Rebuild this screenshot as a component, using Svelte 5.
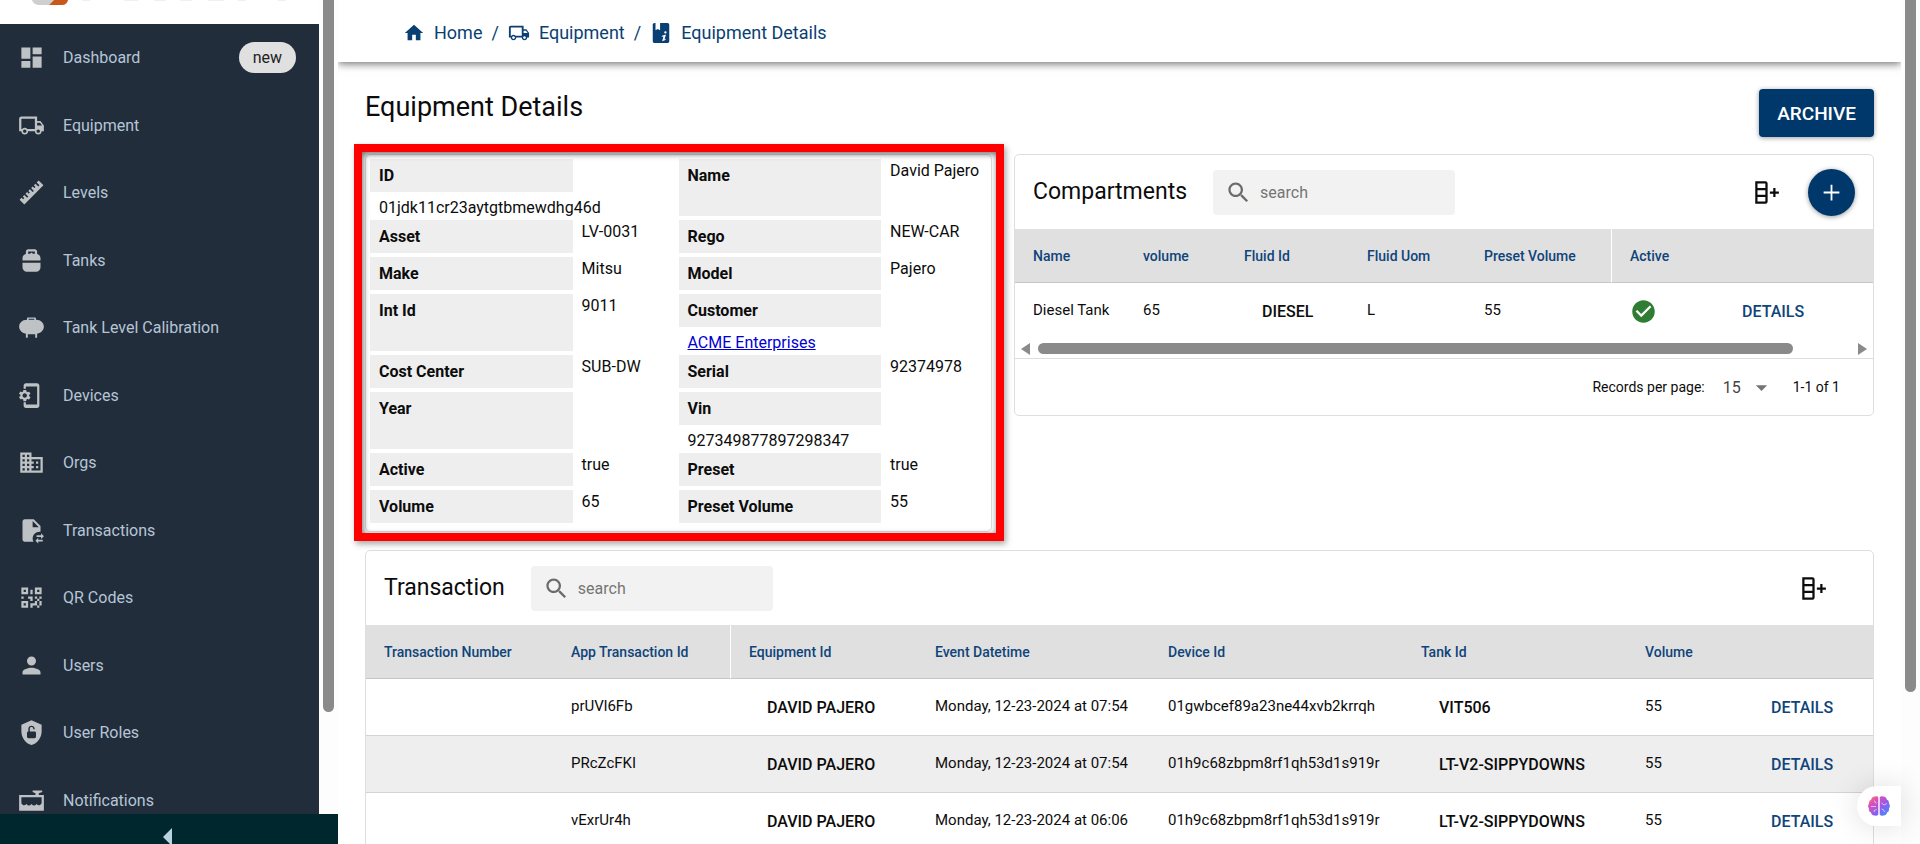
<script>
  // Sidebar entries, each with the name of its icon
  const menu = [
    { label: 'Dashboard', icon: 'dashboard', badge: 'new' },
    { label: 'Equipment', icon: 'truck' },
    { label: 'Levels', icon: 'ruler' },
    { label: 'Tanks', icon: 'tank' },
    { label: 'Tank Level Calibration', icon: 'storage' },
    { label: 'Devices', icon: 'device' },
    { label: 'Orgs', icon: 'domain' },
    { label: 'Transactions', icon: 'fileSwap' },
    { label: 'QR Codes', icon: 'qrcode' },
    { label: 'Users', icon: 'person' },
    { label: 'User Roles', icon: 'shield' },
    { label: 'Notifications', icon: 'level' }
  ];

  const crumbs = [
    { label: 'Home', icon: 'home' },
    { label: 'Equipment', icon: 'truck' },
    { label: 'Equipment Details', icon: 'bookInfo' }
  ];

  // All paths are on a 24x24 grid
  const icons = {
    dashboard: 'M13,3V9H21V3M13,21H21V11H13M3,21H11V15H3M3,13H11V3H3V13Z',
    truck: 'M18 18.5C18.83 18.5 19.5 17.83 19.5 17C19.5 16.17 18.83 15.5 18 15.5C17.17 15.5 16.5 16.17 16.5 17C16.5 17.83 17.17 18.5 18 18.5M19.5 9.5H17V12H21.46L19.5 9.5M6 18.5C6.83 18.5 7.5 17.83 7.5 17C7.5 16.17 6.83 15.5 6 15.5C5.17 15.5 4.5 16.17 4.5 17C4.5 17.83 5.17 18.5 6 18.5M20 8L23 12V17H21C21 18.66 19.66 20 18 20C16.34 20 15 18.66 15 17H9C9 18.66 7.66 20 6 20C4.34 20 3 18.66 3 17H1V6C1 4.89 1.89 4 3 4H17V8H20M3 6V15H3.76C4.31 14.39 5.11 14 6 14C6.89 14 7.69 14.39 8.24 15H15V6H3Z',
    ruler: 'M1.39,18.36L3.16,16.6L4.58,18L5.64,16.95L4.22,15.54L5.64,14.12L8.11,16.6L9.17,15.54L6.7,13.06L8.11,11.65L9.53,13.06L10.59,12L9.17,10.59L10.59,9.17L13.06,11.65L14.12,10.59L11.65,8.11L13.06,6.7L14.47,8.11L15.54,7.05L14.12,5.64L15.54,4.22L18,6.7L19.07,5.64L16.6,3.16L18.36,1.39L22.61,5.64L5.64,22.61L1.39,18.36Z',
    tank: 'M17 6.14V4c0-1.1-.9-2-2-2H9c-1.1 0-2 .9-2 2v2.14c-1.72.45-3 2-3 3.86v2h16v-2c0-1.86-1.28-3.41-3-3.86zM9 4h6v2h-2c0-.55-.45-1-1-1s-1 .45-1 1H9V4zM4 18c0 2.21 1.79 4 4 4h8c2.21 0 4-1.79 4-4v-4H4v4z',
    storage: 'M8 5V4C8 3.4 8.4 3 9 3H15C15.6 3 16 3.4 16 4V5C20.5 5 23 8 23 11.2C23 14.2 20.8 17 17 17.6V21H15.3V18H8.7V21H7V17.6C3.2 17 1 14.2 1 11.2C1 8 3.5 5 8 5M9.5 4.3V5H14.5V4.3Z',
    device: 'M9.8 12.5v-1l1.1-.8c.1-.1.1-.2.1-.3l-1-1.7c-.1-.1-.2-.2-.3-.1l-1.3.4c-.3-.2-.6-.4-.9-.5l-.2-1.3c0-.1-.1-.2-.3-.2H5c-.1 0-.2.1-.3.2l-.2 1.3c-.3.1-.6.3-.9.5l-1.3-.5c-.1 0-.2 0-.3.1l-1 1.7c-.1.1 0 .2.1.3l1.1.8v1l-1.1.8c-.1.2-.1.3-.1.4l1 1.7c.1.1.2.2.3.1l1.4-.4c.3.2.6.4.9.5l.2 1.3c-.1.1.1.2.2.2h2c.1 0 .2-.1.3-.2l.2-1.3c.3-.1.6-.3.9-.5l1.3.5c.1 0 .2 0 .3-.1l1-1.7c.1-.1 0-.2-.1-.3zM6 14c-1.1 0-2-.9-2-2s.9-2 2-2 2 .9 2 2-.9 2-2 2zM17 1H7c-1.1 0-2 .9-2 2v3h2V4h10v16H7v-2H5v3c0 1.1.9 2 2 2h10c1.1 0 2-.9 2-2V3c0-1.1-.9-2-2-2z',
    domain: 'M12 7V3H2v18h20V7H12zM6 19H4v-2h2v2zm0-4H4v-2h2v2zm0-4H4V9h2v2zm0-4H4V5h2v2zm4 12H8v-2h2v2zm0-4H8v-2h2v2zm0-4H8V9h2v2zm0-4H8V5h2v2zm10 12h-8v-2h2v-2h-2v-2h2v-2h-2V9h8v10zm-2-8h-2v2h2v-2zm0 4h-2v2h2v-2z',
    fileSwap: 'M6 2C4.9 2 4 2.9 4 4V20C4 21.1 4.9 22 6 22H13.8C13.3 21.1 13 20.1 13 19C13 15.7 15.7 13 19 13C19.3 13 19.7 13 20 13.1V8L14 2H6M13 9V3.5L18.5 9H13M23 17L20.5 14.5V16.2H16.5V17.8H20.5V19.5L23 17M15.5 21L18 23.5V21.8H22V20.2H18V18.5L15.5 21Z',
    qrcode: 'M3,11H5V13H3V11M11,5H13V9H11V5M9,11H13V15H11V13H9V11M15,11H17V13H19V11H21V13H19V15H21V19H19V21H17V19H13V21H11V17H15V15H17V13H15V11M19,19V15H17V19H19M15,3H21V9H15V3M17,5V7H19V5H17M3,3H9V9H3V3M5,5V7H7V5H5M3,15H9V21H3V15M5,17V19H7V17H5Z',
    person: 'M12 12c2.21 0 4-1.79 4-4s-1.79-4-4-4-4 1.79-4 4 1.79 4 4 4zm0 2c-2.67 0-8 1.34-8 4v2h16v-2c0-2.66-5.33-4-8-4z',
    shield: 'M12 1L3 5V11C3 16.5 6.8 21.7 12 23C17.2 21.7 21 16.5 21 11V5L12 1M16 15.8C16 16.4 15.4 17 14.7 17H9.2C8.6 17 8 16.4 8 15.7V12.2C8 11.6 8.6 11 9.2 11V8.5C9.2 7.1 10.6 6 12 6S14.8 7.1 14.8 8.5V9H13.5V8.5C13.5 7.7 12.8 7.2 12 7.2S10.5 7.7 10.5 8.5V11H14.8C15.4 11 16 11.6 16 12.2V15.8Z',
    level: 'M1 7H15.5V5.5L13 4.5V3H21.5V4.5L18.5 5.5V7H23V21H1V7M3 9V14.5C4.5 16.8 6 16.8 7.5 15C9 16.8 10.5 16.8 12 15C13.5 16.8 15 16.8 16.5 15C18 16.8 19.5 16.8 21 14.5V9H3Z',
    home: 'M10 20v-6h4v6h5v-8h3L12 3 2 12h3v8z',
    bookInfo: 'M5 1H6V9L8.5 7.5L11 9V1H19C20.1 1 21 1.9 21 3V21C21 22.1 20.1 23 19 23H5C3.9 23 3 22.1 3 21V3C3 1.9 3.9 1 5 1M16.8 10A1.3 1.3 0 1 0 16.8 12.6A1.3 1.3 0 1 0 16.8 10M13 14.9L17.4 13.6L15.8 19L17.2 18.4L16.9 19.6L13.3 20.9L14.6 15.7L12.8 16Z',
    search: 'M15.5 14h-.79l-.28-.27C15.41 12.59 16 11.11 16 9.5 16 5.91 13.09 3 9.5 3S3 5.91 3 9.5 5.91 16 9.5 16c1.61 0 3.09-.59 4.23-1.57l.27.28v.79l5 4.99L20.49 19l-4.99-5zm-6 0C7.01 14 5 11.99 5 9.5S7.01 5 9.5 5 14 7.01 14 9.5 11.99 14 9.5 14z',
    columns: 'M11,2A2,2 0 0,1 13,4V20A2,2 0 0,1 11,22H2V2H11M4,10V14H11V10H4M4,16V20H11V16H4M4,4V8H11V4H4M15,11H18V8H20V11H23V13H20V16H18V13H15V11Z',
    check: 'M12 2C6.48 2 2 6.48 2 12s4.48 10 10 10 10-4.48 10-10S17.52 2 12 2zm-2 15l-5-5 1.41-1.41L10 14.17l7.59-7.59L19 8l-9 9z',
    plus: 'M19 12.8h-6.2v6.2h-1.6v-6.2H5v-1.6h6.2V5h1.6v6.2H19z',
    caret: 'M7 10l5 5 5-5z'
  };

  const details = [
    ['ID', '01jdk11cr23aytgtbmewdhg46d'],
    ['Name', 'David Pajero'],
    ['Asset', 'LV-0031'],
    ['Rego', 'NEW-CAR'],
    ['Make', 'Mitsu'],
    ['Model', 'Pajero'],
    ['Int Id', '9011'],
    ['Customer', 'ACME Enterprises', true],
    ['Cost Center', 'SUB-DW'],
    ['Serial', '92374978'],
    ['Year', ''],
    ['Vin', '927349877897298347'],
    ['Active', 'true'],
    ['Preset', 'true'],
    ['Volume', '65'],
    ['Preset Volume', '55']
  ];

  const compartmentCols = [
    { label: 'Name', width: 110 },
    { label: 'volume', width: 101 },
    { label: 'Fluid Id', width: 123 },
    { label: 'Fluid Uom', width: 117 },
    { label: 'Preset Volume', width: 146, divider: true },
    { label: 'Active', width: 94 },
    { label: '', width: 167 }
  ];

  const transactionCols = [
    { label: 'Transaction Number', width: 187 },
    { label: 'App Transaction Id', width: 178, divider: true },
    { label: 'Equipment Id', width: 186 },
    { label: 'Event Datetime', width: 233 },
    { label: 'Device Id', width: 253 },
    { label: 'Tank Id', width: 224 },
    { label: 'Volume', width: 108 },
    { label: '', width: 138 }
  ];

  const transactions = [
    { app: 'prUVl6Fb', equipment: 'David Pajero', date: 'Monday, 12-23-2024 at 07:54', device: '01gwbcef89a23ne44xvb2krrqh', tank: 'VIT506', volume: 55 },
    { app: 'PRcZcFKI', equipment: 'David Pajero', date: 'Monday, 12-23-2024 at 07:54', device: '01h9c68zbpm8rf1qh53d1s919r', tank: 'LT-V2-Sippydowns', volume: 55 },
    { app: 'vExrUr4h', equipment: 'David Pajero', date: 'Monday, 12-23-2024 at 06:06', device: '01h9c68zbpm8rf1qh53d1s919r', tank: 'LT-V2-Sippydowns', volume: 55 }
  ];

  let perPage = $state('15');
</script>

{#snippet icon(name)}
  <svg class="icon" viewBox="0 0 24 24" aria-hidden="true">
    <path d={icons[name]} fill="currentColor" fill-rule="evenodd" />
  </svg>
{/snippet}

{#snippet searchBox(label)}
  <label class="search">
    {@render icon('search')}
    <input type="text" placeholder="search" aria-label={label} />
  </label>
{/snippet}

{#snippet tableHead(cols)}
  <colgroup>
    {#each cols as col}
      <col style="width: {col.width}px" />
    {/each}
  </colgroup>
  <thead>
    <tr>
      {#each cols as col}
        <th class:divider={col.divider}>{col.label}</th>
      {/each}
    </tr>
  </thead>
{/snippet}

<div class="layout">
  <aside>
    <div class="menu-area">
      <div class="menu">
        <div class="logo">
          <svg width="260" height="6" viewBox="0 0 260 6" aria-hidden="true">
            <path d="M0 0H22L17 5H6Q1 4 0 0Z" fill="#cfcfcf" />
            <path d="M22 0H36Q35 5 30 5H17Z" fill="#c9571b" />
            <path d="M50 0h8M92 0h14M122 0h12M148 0h12M176 0h16M206 0h8M246 0h8" stroke="#f0f0f0" stroke-width="2" />
          </svg>
        </div>
        <nav>
          <ul>
            {#each menu as item}
              <li>
                <a href="#{item.icon}">
                  {@render icon(item.icon)}
                  <span class="menu-label">{item.label}</span>
                  {#if item.badge}<span class="badge">{item.badge}</span>{/if}
                </a>
              </li>
            {/each}
          </ul>
        </nav>
      </div>
      <div class="scroll"><div class="thumb menu-thumb"></div></div>
    </div>
    <button class="collapse" aria-label="Collapse menu">
      <svg width="9" height="18" viewBox="0 0 9 18"><path d="M9 0V18L0 9Z" fill="#b9d3e0" /></svg>
    </button>
  </aside>

  <div class="page">
    <header>
      <nav class="crumbs" aria-label="Breadcrumb">
        {#each crumbs as crumb, i}
          {#if i > 0}<span class="slash">/</span>{/if}
          <a href="#{crumb.icon}">{@render icon(crumb.icon)}{crumb.label}</a>
        {/each}
      </nav>
    </header>

    <main>
      <div class="title-row">
        <h1>Equipment Details</h1>
        <button class="archive">Archive</button>
      </div>

      <div class="top">
        <section class="card details">
          <dl>
            {#each details as [label, value, link]}
              <div class="pair">
                <dt>{label}</dt>
                <dd>{#if link}<a href="#customer">{value}</a>{:else}{value}{/if}</dd>
              </div>
            {/each}
          </dl>
          <div class="highlight"></div>
        </section>

        <section class="card">
          <div class="toolbar">
            <h2>Compartments</h2>
            {@render searchBox('Search compartments')}
            <div class="actions">
              <button class="plain" aria-label="Choose columns">{@render icon('columns')}</button>
              <button class="round" aria-label="Add compartment">{@render icon('plus')}</button>
            </div>
          </div>
          <table>
            {@render tableHead(compartmentCols)}
            <tbody>
              <tr>
                <td>Diesel Tank</td>
                <td>65</td>
                <td><button class="flat">Diesel</button></td>
                <td>L</td>
                <td>55</td>
                <td class="status">{@render icon('check')}</td>
                <td><button class="flat primary">Details</button></td>
              </tr>
            </tbody>
          </table>
          <div class="hscroll">
            <svg width="9" height="12" viewBox="0 0 9 12"><path d="M9 0V12L0 6Z" fill="#8a8a8a" /></svg>
            <div class="track"><div class="hthumb"></div></div>
            <svg width="9" height="12" viewBox="0 0 9 12"><path d="M0 0V12L9 6Z" fill="#8a8a8a" /></svg>
          </div>
          <div class="pager">
            <label for="per-page">Records per page:</label>
            <span class="select">
              <select id="per-page" bind:value={perPage}>
                <option>15</option>
                <option>25</option>
                <option>50</option>
              </select>
              {@render icon('caret')}
            </span>
            <span>1-1 of 1</span>
          </div>
        </section>
      </div>

      <section class="card">
        <div class="toolbar">
          <h2>Transaction</h2>
          {@render searchBox('Search transactions')}
          <div class="actions wide">
            <button class="plain" aria-label="Choose columns">{@render icon('columns')}</button>
          </div>
        </div>
        <table class="striped">
          {@render tableHead(transactionCols)}
          <tbody>
            {#each transactions as row}
              <tr>
                <td></td>
                <td>{row.app}</td>
                <td><button class="flat">{row.equipment}</button></td>
                <td>{row.date}</td>
                <td>{row.device}</td>
                <td><button class="flat">{row.tank}</button></td>
                <td>{row.volume}</td>
                <td><button class="flat primary">Details</button></td>
              </tr>
            {/each}
          </tbody>
        </table>
      </section>
    </main>

    <button class="assistant" aria-label="Assistant">
      <svg width="22" height="20" viewBox="0 0 22 20">
        <defs>
          <linearGradient id="brain" x1="0" y1="0" x2="1" y2="1">
            <stop offset="0" stop-color="#f7a13d" />
            <stop offset="0.25" stop-color="#e24fb0" />
            <stop offset="0.6" stop-color="#8f5cf0" />
            <stop offset="1" stop-color="#2d9bff" />
          </linearGradient>
        </defs>
        <path d="M10.3 1.5V18.5Q9 20.5 6.5 19.5Q3.5 19.5 3 16.5Q0.5 15.5 1 12.5Q-0.8 10 1 7.5Q0.8 4.5 3.2 3.5Q4 0.5 6.8 0.6Q9.3 -0.5 10.3 1.5ZM11.7 1.5V18.5Q13 20.5 15.5 19.5Q18.5 19.5 19 16.5Q21.5 15.5 21 12.5Q22.8 10 21 7.5Q21.2 4.5 18.8 3.5Q18 0.5 15.2 0.6Q12.7 -0.5 11.7 1.5Z" fill="url(#brain)" />
        <path d="M3 10.5H8M6.5 4.5Q6.5 7 8.5 7M6 16Q6 13.5 8.5 13.5M13.5 7L16 9L19 7.5M13.5 13Q16 13 16.5 16" fill="none" stroke="#fff" stroke-opacity="0.6" />
      </svg>
    </button>
  </div>
  <div class="scroll page-scroll"><div class="thumb page-thumb"></div></div>
</div>

<style>
  :global(body) {
    background: #fff;
  }

  .layout {
    display: flex;
    height: 100vh;
    overflow: hidden;
    font-family: Roboto, "Liberation Sans", sans-serif;
    font-size: 16px;
    color: #0c0c0c;
  }

  button, input, select {
    font: inherit;
    color: inherit;
    border: 0;
    padding: 0;
    background: none;
  }

  h1, h2, ul, dl, dd {
    margin: 0;
    padding: 0;
    font-weight: 400;
  }

  .icon {
    display: block;
    flex: none;
    width: 27px;
    height: 27px;
  }

  /* Sidebar */
  aside {
    display: flex;
    flex-direction: column;
    flex: none;
    width: 338px;
  }

  .menu-area {
    display: flex;
    flex: 1;
    min-height: 0;
    overflow: hidden;
  }

  .menu {
    flex: 1;
  }

  .logo {
    height: 24px;
    padding-left: 32px;
  }

  .logo svg {
    display: block;
  }

  .menu nav {
    background: #212d3b;
  }

  ul {
    list-style: none;
  }

  li a {
    display: flex;
    align-items: center;
    height: 67px;
    padding: 0 23px 0 18px;
    color: #b6c5d6;
    text-decoration: none;
  }

  li:nth-child(even) a {
    height: 68px;
  }

  li .icon {
    color: #bfc2c4;
  }

  .menu-label {
    flex: 1;
    padding-left: 18px;
  }

  .badge {
    padding: 0 14px;
    line-height: 31px;
    border-radius: 16px;
    background: #e0e0e0;
    color: #222;
  }

  .collapse {
    display: flex;
    justify-content: center;
    flex: none;
    height: 30px;
    padding: 14px 3px 0 0;
    overflow: hidden;
    background: #00272d;
  }

  .collapse svg {
    flex: none;
  }

  .scroll {
    flex: none;
    width: 11px;
    padding: 0 4px;
    background: #fdfdfd;
  }

  .thumb {
    border-radius: 0 0 6px 6px;
    background: #8a8a8a;
  }

  .menu-thumb {
    height: 87.5%;
  }

  .page-thumb {
    height: 82%;
  }

  /* Page */
  .page {
    position: relative;
    flex: 1;
    min-width: 0;
  }

  header {
    padding: 20px 65px 16px;
    box-shadow: 0 2px 8px rgba(0, 0, 0, 0.55);
    clip-path: inset(0 0 -16px 0);
  }

  .crumbs {
    display: flex;
    align-items: center;
    gap: 9px;
    height: 26px;
    font-size: 18px;
    line-height: 26px;
    color: #0a3f73;
  }

  .crumbs .icon {
    width: 22px;
    height: 22px;
  }

  .crumbs a {
    display: flex;
    align-items: center;
    gap: 9px;
    color: #0a3f73;
    text-decoration: none;
  }

  main {
    padding: 27px 27px 0;
  }

  .title-row {
    display: flex;
    justify-content: space-between;
    height: 48px;
    margin-bottom: 17px;
  }

  h1 {
    font-size: 27px;
    line-height: 36px;
  }

  .archive {
    padding: 0 18px;
    border-radius: 4px;
    background: #00386b;
    color: #fff;
    font-size: 19px;
    font-weight: 500;
    text-transform: uppercase;
    box-shadow: 0 1px 5px rgba(0, 0, 0, 0.4);
  }

  .top {
    display: grid;
    grid-template-columns: 627fr 860fr;
    align-items: start;
    gap: 22px;
    margin-bottom: 18px;
  }

  .card {
    border: 1px solid #dedede;
    border-radius: 5px;
    background: #fff;
  }

  .details {
    position: relative;
    padding: 4px;
  }

  dl {
    display: grid;
    grid-template-columns: 1fr 1fr;
  }

  .pair {
    display: flex;
    flex-wrap: wrap;
  }

  dt {
    box-sizing: border-box;
    width: calc(66% - 1px);
    margin-bottom: 4px;
    padding: 5px 9px 4px;
    background: #eee;
    font-weight: 700;
    line-height: 24px;
  }

  dd {
    padding-left: 9px;
    line-height: 24px;
  }

  dd a {
    color: #0000d6;
  }

  /* Red marker frame around the details card */
  .highlight {
    position: absolute;
    inset: -11px -13px -10px -12px;
    border: 8px solid #f00;
    box-shadow: 2px 3px 6px rgba(0, 0, 0, 0.35), inset 1px 2px 6px rgba(0, 0, 0, 0.6);
    pointer-events: none;
  }

  .toolbar {
    display: flex;
    align-items: center;
    height: 74px;
    padding: 0 18px;
  }

  h2 {
    font-size: 23px;
    line-height: 32px;
  }

  .search {
    display: flex;
    align-items: center;
    width: 230px;
    height: 45px;
    margin-left: 26px;
    padding-left: 12px;
    border-radius: 4px;
    background: #f2f2f2;
    color: #6b6b6b;
  }

  .search input {
    width: 170px;
    padding-left: 8px;
    outline: 0;
  }

  .search input::placeholder {
    color: #757575;
    opacity: 1;
  }

  .actions {
    display: flex;
    align-items: center;
    gap: 28px;
    margin-left: auto;
  }

  .wide {
    padding-right: 28px;
  }

  .round {
    display: flex;
    align-items: center;
    justify-content: center;
    width: 47px;
    height: 47px;
    border-radius: 50%;
    background: #00386b;
    color: #fff;
    box-shadow: 0 1px 5px rgba(0, 0, 0, 0.4);
  }

  table {
    width: 100%;
    table-layout: fixed;
    border-collapse: separate;
    border-spacing: 0;
  }

  th {
    height: 53px;
    padding: 0 0 0 18px;
    border-bottom: 1px solid #c6c6c6;
    background: #e0e0e0;
    color: #0f447a;
    font-size: 14px;
    font-weight: 500;
    text-align: left;
    white-space: nowrap;
  }

  .divider {
    border-right: 1px solid #fff;
  }

  td {
    height: 54px;
    padding: 0 0 2px 18px;
    font-size: 15px;
    white-space: nowrap;
  }

  .striped td {
    border-bottom: 1px solid #d4d4d4;
  }

  .striped tr:nth-child(even) td {
    background: #eee;
  }

  .flat {
    padding: 2px 18px 0;
    font-size: 16px;
    font-weight: 500;
    text-transform: uppercase;
  }

  .primary {
    color: #0f447a;
  }

  .status {
    padding-bottom: 0;
    color: #2e7d32;
  }

  .hscroll {
    display: flex;
    align-items: center;
    gap: 8px;
    height: 19px;
    padding: 0 6px;
    border-bottom: 1px solid #dedede;
  }

  .track {
    flex: 1;
  }

  .hthumb {
    width: 93%;
    height: 11px;
    border-radius: 6px;
    background: #8a8a8a;
  }

  .pager {
    display: flex;
    align-items: center;
    justify-content: flex-end;
    height: 56px;
    padding-right: 33px;
    font-size: 14px;
  }

  .select {
    display: flex;
    align-items: center;
    margin: 0 18px;
    color: #757575;
  }

  select {
    width: 25px;
    appearance: none;
    color: #444;
    font-size: 16px;
  }

  /* Floating assistant tab on the right edge */
  .assistant {
    position: absolute;
    right: 0;
    bottom: 18px;
    display: flex;
    align-items: center;
    width: 44px;
    height: 40px;
    padding-left: 11px;
    border-radius: 20px 0 0 20px;
    background: #fff;
    box-shadow: 0 0 30px rgba(0, 0, 0, 0.14);
  }
</style>
